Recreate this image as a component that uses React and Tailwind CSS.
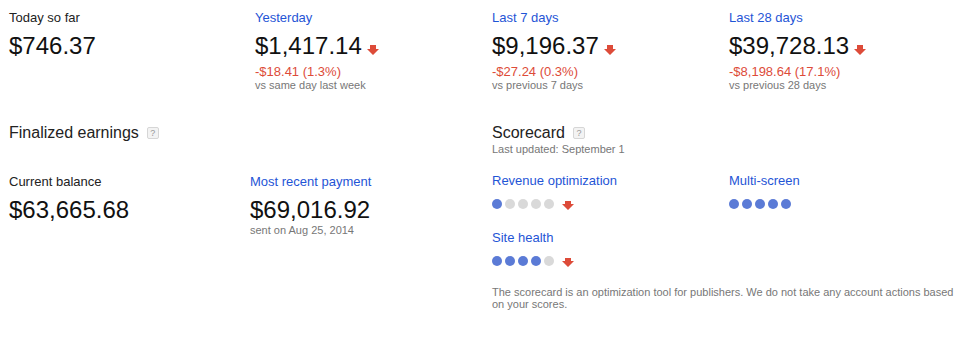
import React from "react";

const Arrow = ({ className = "", h = 10 }) => (
  <svg width="12" height={h} viewBox={`0 0 12 ${h}`} className={className}>
    <path d={`M3 0H9V${h - 6}H12L6 ${h}L0 ${h - 6}H3Z`} fill="#dd4b39" />
  </svg>
);

const Help = () => (
  <span className="ml-[8px] inline-flex h-[12px] w-[12px] items-center justify-center rounded-[2px] border border-[#d6d6d6] bg-[#f3f3f3] text-[9px] leading-none text-[#999]">
    ?
  </span>
);

const Stat = ({ label, link, value, arrow, delta, note }) => (
  <div>
    <div className={`text-[13px] leading-[15px] ${link ? "text-[#1f55d6]" : "text-[#222]"}`}>{label}</div>
    <div className="mt-[7px] flex items-baseline text-[24px] leading-[28px] text-[#111]">
      <span>{value}</span>
      {arrow && <Arrow className="ml-[5px] translate-y-[1px]" />}
    </div>
    {delta && <div className="mt-[5px] text-[13px] leading-[14px] text-[#dd4b39]">{delta}</div>}
    {note && <div className="text-[11px] leading-[13px] text-[#777]">{note}</div>}
  </div>
);

const Dots = ({ n, arrow }) => (
  <div className="mt-[11px] flex h-[10px] items-center gap-[3px]">
    {[0, 1, 2, 3, 4].map((i) => (
      <span
        key={i}
        className={`h-[10px] w-[10px] rounded-full ${i < n ? "bg-[#5b7bd6]" : "bg-[#d9d9d9]"}`}
      />
    ))}
    {arrow && <Arrow h={9} className="ml-[5px] mt-[2px]" />}
  </div>
);

export default function App() {
  return (
    <div className="h-[348px] w-[974px] bg-white pl-[9px] pt-[10px] font-['Liberation_Sans',Arial,sans-serif]">
      <div className="grid grid-cols-[246px_237px_237px_237px]">
        <Stat label="Today so far" value="$746.37" />
        <Stat label="Yesterday" link value="$1,417.14" arrow delta="-$18.41 (1.3%)" note="vs same day last week" />
        <Stat label="Last 7 days" link value="$9,196.37" arrow delta="-$27.24 (0.3%)" note="vs previous 7 days" />
        <Stat label="Last 28 days" link value="$39,728.13" arrow delta="-$8,198.64 (17.1%)" note="vs previous 28 days" />
      </div>

      <div className="mt-[31px] grid grid-cols-[483px_474px]">
        <div>
          <div className="flex h-[20px] items-center text-[16px] leading-[20px] text-[#222]">
            Finalized earnings
            <Help />
          </div>
          <div className="mt-[31px] grid grid-cols-[241px_242px]">
            <Stat label="Current balance" value="$63,665.68" />
            <Stat label="Most recent payment" link value="$69,016.92" note="sent on Aug 25, 2014" />
          </div>
        </div>
        <div>
          <div className="flex h-[20px] items-center text-[16px] leading-[20px] text-[#222]">
            Scorecard
            <Help />
          </div>
          <div className="text-[11px] leading-[13px] text-[#777]">Last updated: September 1</div>
          <div className="mt-[17px] grid grid-cols-[237px_237px]">
            <div>
              <div className="text-[13px] leading-[15px] text-[#1f55d6]">Revenue optimization</div>
              <Dots n={1} arrow />
              <div className="mt-[21px] text-[13px] leading-[15px] text-[#1f55d6]">Site health</div>
              <Dots n={4} arrow />
            </div>
            <div>
              <div className="text-[13px] leading-[15px] text-[#1f55d6]">Multi-screen</div>
              <Dots n={5} />
            </div>
          </div>
          <p className="mt-[20px] w-[468px] text-[11px] leading-[12px] text-[#777]">
            The scorecard is an optimization tool for publishers. We do not take any account actions based on your scores.
          </p>
        </div>
      </div>
    </div>
  );
}
